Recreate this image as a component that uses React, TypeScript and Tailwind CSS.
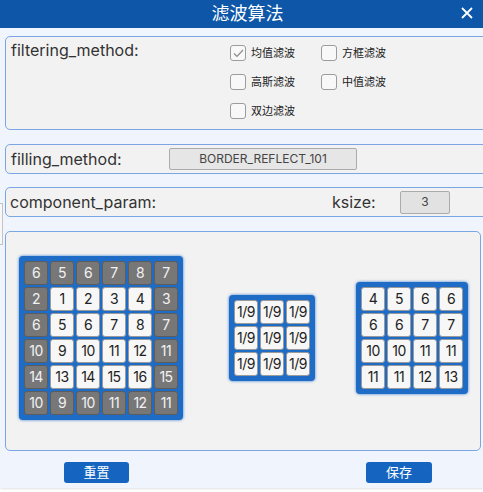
import React from 'react';

const FONT = "font-['Inter','Noto_Sans_CJK_SC',sans-serif]";

const sourceGrid = [
  [6, 5, 6, 7, 8, 7],
  [2, 1, 2, 3, 4, 3],
  [6, 5, 6, 7, 8, 7],
  [10, 9, 10, 11, 12, 11],
  [14, 13, 14, 15, 16, 15],
  [10, 9, 10, 11, 12, 11],
];

const resultGrid = [
  [4, 5, 6, 6],
  [6, 6, 7, 7],
  [10, 10, 11, 11],
  [11, 11, 12, 13],
];

function Cell({ value, padded }: { value: string | number; padded?: boolean }) {
  return (
    <div
      className={
        padded
          ? 'w-[24px] h-[24px] rounded-[3px] border border-[#5c5c5c] bg-[#777777] text-[#f2f2f2] flex items-center justify-center text-[14px] leading-none tracking-[-0.5px]'
          : 'w-[24px] h-[24px] rounded-[3px] border border-[#9a9a9a] bg-[#f7f7f7] text-[#222] flex items-center justify-center text-[14px] leading-none tracking-[-0.5px]'
      }
    >
      {value}
    </div>
  );
}

function Frame({ cols, children }: { cols: number; children: React.ReactNode }) {
  return (
    <div
      className="bg-[#1f6cc6] rounded-[4px] p-[5px] shadow-[0_0_3px_rgba(31,108,198,0.9)] grid gap-[2px]"
      style={{ gridTemplateColumns: `repeat(${cols}, 24px)` }}
    >
      {children}
    </div>
  );
}

function Checkbox({ label, checked }: { label: string; checked?: boolean }) {
  return (
    <div className="flex items-center h-[16px]">
      <div className="w-[16px] h-[16px] rounded-[3px] border border-[#9c9c9c] bg-[#f8f8f8] flex items-center justify-center">
        {checked && (
          <svg width="11" height="9" viewBox="0 0 11 9" fill="none">
            <path d="M1 4.5L4 7.5L10 1" stroke="#8a8a8a" strokeWidth="1.2" />
          </svg>
        )}
      </div>
      <span className="ml-[5px] text-[11px] text-[#222] leading-none">{label}</span>
    </div>
  );
}

export default function App() {
  return (
    <div className={`relative w-[483px] h-[492px] bg-white overflow-hidden ${FONT}`}>
      <div className="h-[488px] bg-[#f0f5fd] shadow-[0_1px_2px_rgba(0,0,0,0.12)] flex flex-col">
        {/* Title bar */}
        <div className="relative h-[28px] bg-[#0d56a8] flex items-center justify-center pl-[12px]">
          <span className="text-white text-[18px] leading-none">滤波算法</span>
          <svg className="absolute left-[461px] top-[7px]" width="12" height="12" viewBox="0 0 12 12">
            <path d="M1 1L11 11M11 1L1 11" stroke="white" strokeWidth="1.8" />
          </svg>
        </div>

        <div className="pl-[5px]">
          {/* filtering_method */}
          <div className="mt-[8px] w-[490px] h-[94px] border border-[#7aa7e3] rounded-[5px] bg-[#f2f2f2] flex items-start">
            <div className="w-[224px] pl-[5px] pt-[3px] text-[16px] text-[#333] leading-[20px]">filtering_method:</div>
            <div className="pt-[8px] grid grid-cols-[91px_91px] gap-y-[13px] content-start">
              <Checkbox label="均值滤波" checked />
              <Checkbox label="方框滤波" />
              <Checkbox label="高斯滤波" />
              <Checkbox label="中值滤波" />
              <Checkbox label="双边滤波" />
            </div>
          </div>

          {/* filling_method */}
          <div className="mt-[14px] w-[490px] h-[30px] border border-[#7aa7e3] rounded-[5px] bg-[#f2f2f2] flex items-center">
            <div className="w-[163px] pl-[5px] text-[16px] text-[#333] leading-[20px]">filling_method:</div>
            <div className="w-[188px] h-[22px] border border-[#ababab] rounded-[2px] bg-[#e6e6e6] flex items-center justify-center text-[12px] text-[#444]">
              BORDER_REFLECT_101
            </div>
          </div>

          {/* component_param */}
          <div className="mt-[13px] w-[490px] h-[30px] border border-[#7aa7e3] rounded-[5px] bg-[#f2f2f2] flex items-center">
            <div className="w-[326px] pl-[4px] text-[16px] text-[#333] leading-[20px]">component_param:</div>
            <div className="w-[68px] text-[16px] text-[#333] leading-[20px]">ksize:</div>
            <div className="w-[50px] h-[23px] border border-[#ababab] rounded-[2px] bg-[#e2e2e2] flex items-center justify-center text-[12px] text-[#444]">
              3
            </div>
          </div>

          {/* preview */}
          <div className="mt-[14px] w-[476px] h-[220px] border border-[#7aa7e3] rounded-[5px] bg-[#f2f2f2] flex items-center pl-[13px] pb-[6px]">
            <Frame cols={6}>
              {sourceGrid.map((row, r) =>
                row.map((v, c) => (
                  <Cell key={`${r}-${c}`} value={v} padded={r === 0 || r === 5 || c === 0 || c === 5} />
                ))
              )}
            </Frame>
            <div className="ml-[46px]">
              <Frame cols={3}>
                {Array.from({ length: 9 }).map((_, i) => (
                  <Cell key={i} value="1/9" />
                ))}
              </Frame>
            </div>
            <div className="ml-[41px]">
              <Frame cols={4}>
                {resultGrid.map((row, r) => row.map((v, c) => <Cell key={`${r}-${c}`} value={v} />))}
              </Frame>
            </div>
          </div>

          {/* actions */}
          <div className="mt-[11px] flex">
            <button className="ml-[59px] w-[65px] h-[21px] rounded-[3px] bg-[#1565c0] text-white text-[13px] leading-none">
              重置
            </button>
            <button className="ml-[237px] w-[66px] h-[21px] rounded-[3px] bg-[#1565c0] text-white text-[13px] leading-none">
              保存
            </button>
          </div>
        </div>
      </div>

      {/* partial element peeking in at the left edge */}
      <div className="absolute left-[-10px] top-[203px] w-[13px] h-[42px] border border-[#c4c4c4] bg-[#f7f7f7]" />
    </div>
  );
}
